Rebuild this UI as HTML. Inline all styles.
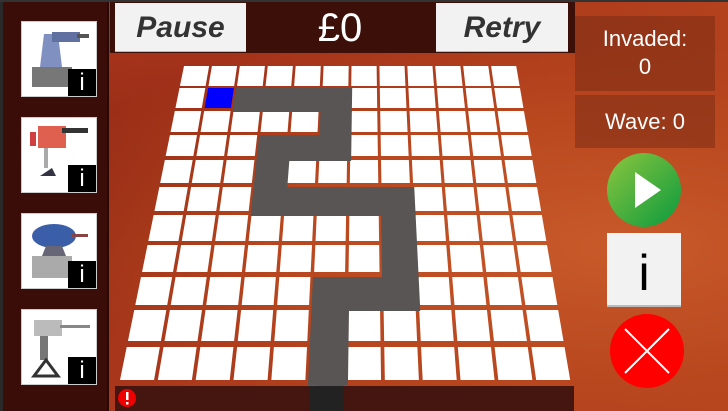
<!DOCTYPE html>
<html><head><meta charset="utf-8">
<style>
*{margin:0;padding:0;box-sizing:border-box}
body{width:728px;height:411px;overflow:hidden;position:relative;font-family:"Liberation Sans",sans-serif;
background:radial-gradient(ellipse at 85% 60%,#c85a2a 0%,#b8461e 40%,transparent 70%),
radial-gradient(ellipse at 30% 50%,#8a2412 0%,#a3321a 50%,#b4421e 100%);}
.topline{position:absolute;left:0;top:0;width:728px;height:2px;background:#333}
.left{position:absolute;left:0;top:2px;width:109px;height:409px;background:#3a0d09;border-left:3px solid #2a2a2a;border-right:2px solid #2a0805}
.card{position:absolute;left:18px;width:76px;height:76px;background:#fff;border:1px solid #ccc}
.card .i{position:absolute;right:0;bottom:0;width:28px;height:27px;background:#000;color:#fff;font-size:24px;text-align:center;line-height:27px}
.topbar{position:absolute;left:110px;top:2px;width:465px;height:51px;background:#3c0f09}
.btn{position:absolute;top:3px;height:49px;background:#f2f2f2;color:#333;font-weight:bold;font-style:italic;font-size:30px;text-align:center;line-height:49px;border-bottom:1px solid #bbb}
.money{position:absolute;left:300px;top:4px;width:80px;text-align:center;color:#fff;font-size:40px;line-height:48px}
.box{position:absolute;left:575px;width:140px;background:rgba(110,40,20,.45);color:#fff;font-size:22px;text-align:center}
.bottombar{position:absolute;left:115px;top:386px;width:459px;height:25px;background:#45150f}
</style></head><body>
<div class="topline"></div>
<div class="left">
 <div class="card" style="top:19px"><svg width="74" height="74"><rect x="10" y="45" width="40" height="20" fill="#777"/><polygon points="22,12 36,12 40,45 18,45" fill="#8090c0"/><rect x="30" y="10" width="28" height="10" fill="#6070a0"/><rect x="55" y="12" width="12" height="4" fill="#555"/></svg><div class="i">i</div></div>
 <div class="card" style="top:115px"><svg width="74" height="74"><rect x="16" y="8" width="28" height="22" fill="#e06050"/><rect x="40" y="10" width="26" height="5" fill="#333"/><rect x="8" y="14" width="6" height="14" fill="#d04040"/><polygon points="18,58 30,50 34,58" fill="#334"/><rect x="22" y="30" width="4" height="20" fill="#aaa"/></svg><div class="i">i</div></div>
 <div class="card" style="top:211px"><svg width="74" height="74"><ellipse cx="32" cy="22" rx="22" ry="12" fill="#3a5ea8"/><rect x="50" y="20" width="16" height="3" fill="#844"/><polygon points="24,32 40,32 44,42 20,42" fill="#667"/><rect x="10" y="42" width="40" height="22" fill="#aaa"/></svg><div class="i">i</div></div>
 <div class="card" style="top:307px"><svg width="74" height="74"><rect x="12" y="10" width="28" height="16" fill="#bbb"/><rect x="38" y="15" width="30" height="3" fill="#888"/><rect x="18" y="26" width="8" height="24" fill="#777"/><polygon points="12,66 24,50 36,66" fill="none" stroke="#333" stroke-width="3"/></svg><div class="i">i</div></div>
</div>
<div class="topbar"></div>
<div class="btn" style="left:115px;width:131px">Pause</div>
<div class="money" style="left:300px">£0</div>
<div class="btn" style="left:436px;width:132px">Retry</div>
<div class="box" style="top:16px;height:75px;line-height:28px;padding-top:9px">Invaded:<br>0</div>
<div class="box" style="top:95px;height:53px;line-height:53px">Wave: 0</div>
<svg style="position:absolute;left:0;top:0" width="728" height="411">
 <defs><linearGradient id="g" x1="0" y1="0" x2="1" y2="1"><stop offset="0" stop-color="#8cc63e"/><stop offset="1" stop-color="#0a9a3e"/></linearGradient></defs>
 <g id="grid"></g>
 <circle cx="644" cy="190" r="37" fill="url(#g)"/>
 <polygon points="635,172 635,208 661,190" fill="#fff"/>
 <rect x="607" y="233" width="74" height="74" fill="#f2f2f2"/>
 <rect x="607" y="305" width="74" height="2" fill="#bbb"/>
 <text x="644" y="290" font-size="50" text-anchor="middle" font-family="Liberation Sans" fill="#000">i</text>
 <circle cx="647" cy="351" r="37" fill="#f00"/>
 <line x1="625" y1="329" x2="669" y2="373" stroke="#fff" stroke-width="2"/>
 <line x1="669" y1="329" x2="625" y2="373" stroke="#fff" stroke-width="2"/>
</svg>
<div class="bottombar"></div>
<div style="position:absolute;left:310px;top:386px;width:33px;height:25px;background:#222"></div>
<svg style="position:absolute;left:117px;top:388px" width="20" height="20"><circle cx="10" cy="10" r="9" fill="#e00"/><rect x="9" y="4" width="2.5" height="8" fill="#fff"/><rect x="9" y="14" width="2.5" height="2.5" fill="#fff"/></svg>
<script>
var tops=[66,88,111,135,160,187,215,245,277,310,347],bots=[86,108,132,156,183,211,241,272,305,341,380];
function L(y){var t=(y-66)/314;return [184-64*t,519+55*t];}
var path={1:[2,3,4,5],2:[5],3:[3,4,5],4:[3],5:[3,4,5,6,7],6:[7],7:[7],8:[5,6,7],9:[5],10:[5]};
var s="";
var gray="";
for(var r=0;r<11;r++){
 var y0=tops[r],y1=bots[r];
 var e0=L(y0),e1=L(y1);
 var pitch=(tops[r+1]||384)-y0;
 for(var c=0;c<12;c++){
  var w0=(e0[1]-e0[0])/12,w1=(e1[1]-e1[0])/12;
  var isP=path[r]&&path[r].indexOf(c)>=0;
  var x00=e0[0]+w0*c,x01=e0[0]+w0*(c+1)-w0*0.1;
  var x10=e1[0]+w1*c,x11=e1[0]+w1*(c+1)-w1*0.1;
  if(isP){
   var yb=y0+pitch+1;var eb=L(yb);var wb=(eb[1]-eb[0])/12;
   gray+='<polygon points="'+(e0[0]+w0*c-1)+','+y0+' '+(e0[0]+w0*(c+1)+1)+','+y0+' '+(eb[0]+wb*(c+1)+1)+','+yb+' '+(eb[0]+wb*c-1)+','+yb+'" fill="#595554"/>';
  } else {
   var col=(r==1&&c==1)?"#0000ff":"#fff";
   s+='<polygon points="'+x00+','+y0+' '+x01+','+y0+' '+x11+','+y1+' '+x10+','+y1+'" fill="'+col+'"/>';
  }
 }
}
gray+='<rect x="316" y="380" width="28" height="6" fill="#595554"/>';
document.getElementById("grid").innerHTML=s+gray;
</script>
</body></html>
